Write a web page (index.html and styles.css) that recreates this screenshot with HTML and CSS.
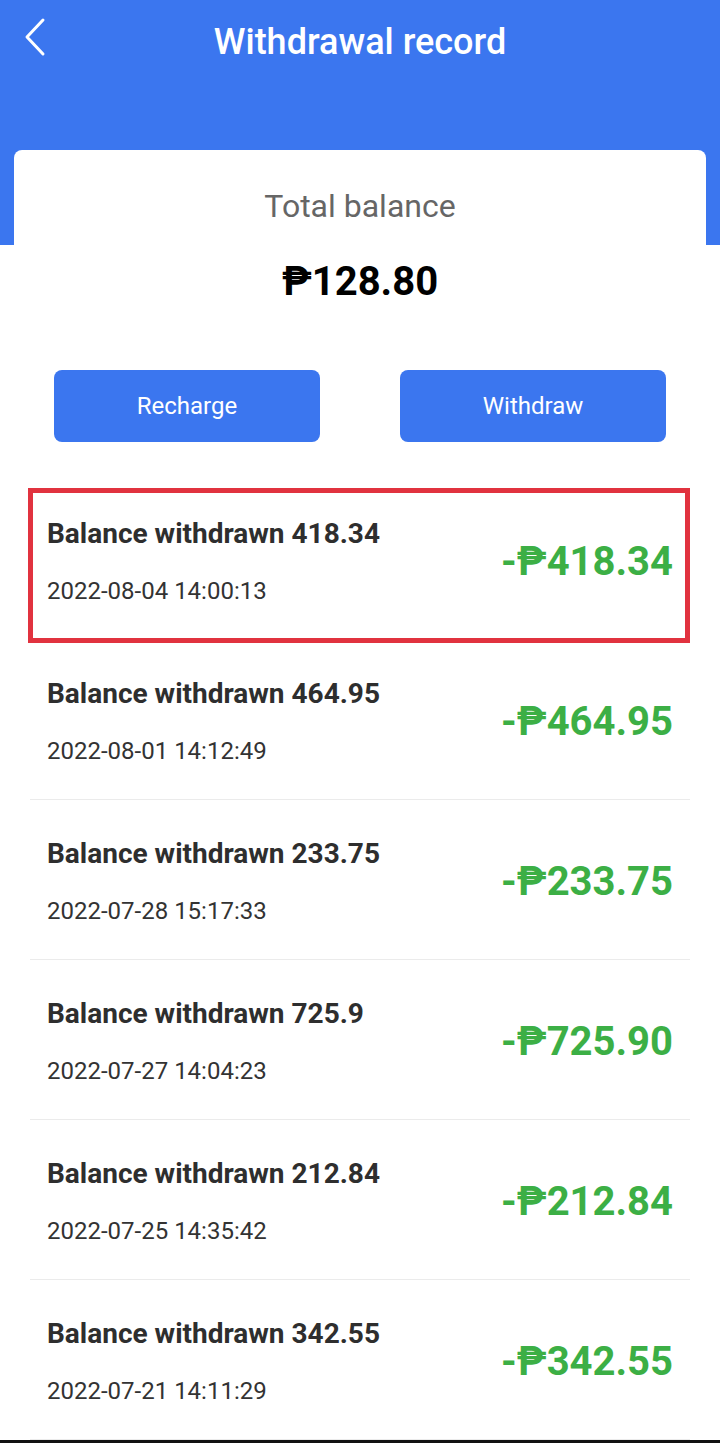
FILE: index.html
```html
<!DOCTYPE html>
<html lang="en">
<head>
    <meta charset="UTF-8">
    <meta name="viewport" content="width=device-width, initial-scale=1.0">
    <title>Withdrawal record</title>
    <link rel="stylesheet" href="styles.css">
</head>
<body>

    <header class="top-bar">
        <div class="nav">
            <a class="back-btn" href="#">
                <svg width="24" height="40" viewBox="0 0 24 40">
                    <polyline points="20,3 4,20 20,37" fill="none" stroke="#fff" stroke-width="3" stroke-linecap="round" stroke-linejoin="round"/>
                </svg>
            </a>
            <h1>Withdrawal record</h1>
        </div>
    </header>

    <main class="card">
        <div class="balance">
            <p class="balance-label">Total balance</p>
            <p class="balance-amount">₱128.80</p>
        </div>

        <div class="actions">
            <button class="action-btn">Recharge</button>
            <button class="action-btn">Withdraw</button>
        </div>

        <ul class="records">
            <li class="record highlight">
                <div class="record-info">
                    <span class="record-title">Balance withdrawn 418.34</span>
                    <span class="record-date">2022-08-04 14:00:13</span>
                </div>
                <span class="record-amount">-₱418.34</span>
            </li>
            <li class="record">
                <div class="record-info">
                    <span class="record-title">Balance withdrawn 464.95</span>
                    <span class="record-date">2022-08-01 14:12:49</span>
                </div>
                <span class="record-amount">-₱464.95</span>
            </li>
            <li class="record">
                <div class="record-info">
                    <span class="record-title">Balance withdrawn 233.75</span>
                    <span class="record-date">2022-07-28 15:17:33</span>
                </div>
                <span class="record-amount">-₱233.75</span>
            </li>
            <li class="record">
                <div class="record-info">
                    <span class="record-title">Balance withdrawn 725.9</span>
                    <span class="record-date">2022-07-27 14:04:23</span>
                </div>
                <span class="record-amount">-₱725.90</span>
            </li>
            <li class="record">
                <div class="record-info">
                    <span class="record-title">Balance withdrawn 212.84</span>
                    <span class="record-date">2022-07-25 14:35:42</span>
                </div>
                <span class="record-amount">-₱212.84</span>
            </li>
            <li class="record">
                <div class="record-info">
                    <span class="record-title">Balance withdrawn 342.55</span>
                    <span class="record-date">2022-07-21 14:11:29</span>
                </div>
                <span class="record-amount">-₱342.55</span>
            </li>
        </ul>
    </main>

    <div class="bottom-edge"></div>

</body>
</html>
```

FILE: styles.css
```css
body {
    font-family: Roboto, "Liberation Sans", sans-serif;
    margin: 0;
    padding: 0;
    background-color: #fff;
}

.top-bar {
    background-color: #3b76ef;
    height: 245px;
}

.nav {
    display: flex;
    align-items: center;
    justify-content: center;
    height: 84px;
    position: relative;
}

.nav h1 {
    margin: 0;
    color: #fff;
    font-size: 36px;
    font-weight: 500;
}

/* back arrow sits over the bar, left side */
.back-btn {
    position: absolute;
    left: 23px;
    top: 17px;
    display: block;
    line-height: 0;
}

.card {
    margin: -95px 14px 0;
    background-color: #fff;
    border-radius: 8px 8px 0 0;
    padding-top: 36px;
}

.balance {
    text-align: center;
}

.balance p {
    margin: 0;
}

.balance-label {
    font-size: 32px;
    line-height: 40px;
    color: #666;
}

.balance-amount {
    margin-top: 31px !important;
    font-size: 40px;
    line-height: 50px;
    font-weight: 700;
    color: #000;
}

.actions {
    display: flex;
    gap: 80px;
    padding: 0 40px;
    margin-top: 63px;
}

.action-btn {
    flex: 1;
    height: 72px;
    border: none;
    border-radius: 8px;
    background-color: #3b76ef;
    color: #fff;
    font-family: inherit;
    font-size: 24px;
    cursor: pointer;
}

.records {
    list-style: none;
    margin: 38px 0 0;
    padding: 0 16px;
}

.record {
    display: flex;
    justify-content: space-between;
    align-items: center;
    height: 155px;
    padding: 4px 17px 0;
    border-bottom: 1px solid #ebebeb;
    position: relative;
}

/* red marker box drawn over the first record */
.record.highlight::after {
    content: "";
    position: absolute;
    top: 8px;
    bottom: -4px;
    left: -2px;
    right: 0;
    border: 5px solid #e1323f;
}

.record-info {
    display: flex;
    flex-direction: column;
    gap: 27px;
    margin-top: 1px;
}

.record-title {
    font-size: 28px;
    line-height: 30px;
    font-weight: 700;
    color: #2e2e2e;
}

.record-date {
    font-size: 24px;
    line-height: 30px;
    color: #333;
}

.record-amount {
    font-size: 40px;
    font-weight: 700;
    color: #3caf45;
}

.bottom-edge {
    height: 3px;
    background-color: #111;
}
```
